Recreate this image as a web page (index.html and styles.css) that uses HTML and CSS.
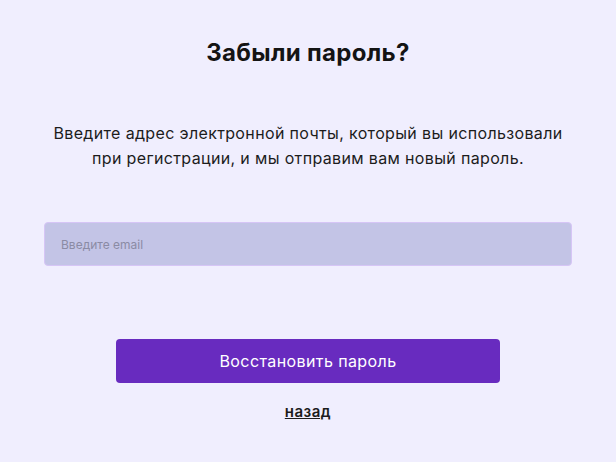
FILE: index.html
```html
<!DOCTYPE html>
<html lang="ru">
<head>
<meta charset="utf-8">
<title>Забыли пароль?</title>
<link rel="stylesheet" href="styles.css">
</head>
<body>
<main class="page">
  <h1 class="title">Забыли пароль?</h1>
  <p class="lead">Введите адрес электронной почты, который вы использовали<br>при регистрации, и мы отправим вам новый пароль.</p>
  <form class="form">
    <input class="field" type="email" placeholder="Введите email">
    <button class="submit" type="button">Восстановить пароль</button>
    <a class="back" href="#">назад</a>
  </form>
</main>
</body>
</html>
```
FILE: styles.css
```css
html, body {
  margin: 0;
  padding: 0;
  background: #f0eefe;
}
body {
  font-family: "Inter", "Noto Sans", sans-serif;
  color: #141414;
}
.page {
  width: 616px;
  height: 462px;
  box-sizing: border-box;
  padding-top: 38px;
  display: flex;
  flex-direction: column;
  align-items: center;
}
.title {
  margin: 0;
  font-size: 24px;
  line-height: 30px;
  font-weight: 700;
  letter-spacing: 0.3px;
}
.lead {
  margin: 53px 0 0;
  font-size: 16px;
  line-height: 25px;
  letter-spacing: 0.35px;
  text-align: center;
  color: #1c1c1c;
}
.form {
  margin-top: 51px;
  display: flex;
  flex-direction: column;
  align-items: center;
}
.field {
  width: 528px;
  height: 44px;
  box-sizing: border-box;
  background: #c3c4e6;
  border: 1px solid #d6c5f6;
  border-radius: 4px;
  padding: 0 16px;
  font-family: inherit;
  font-size: 12px;
  color: #333;
  outline: none;
}
.field::placeholder {
  color: #8b8ba4;
}
.submit {
  margin-top: 73px;
  width: 384px;
  height: 44px;
  background: #682bbf;
  border: none;
  border-radius: 4px;
  color: #fff;
  font-family: inherit;
  font-size: 16px;
  letter-spacing: 0.4px;
  cursor: pointer;
}
.back {
  margin-top: 19px;
  font-size: 15px;
  font-weight: 600;
  letter-spacing: 0.5px;
  color: #1c1c1c;
  text-decoration: underline;
}
```
